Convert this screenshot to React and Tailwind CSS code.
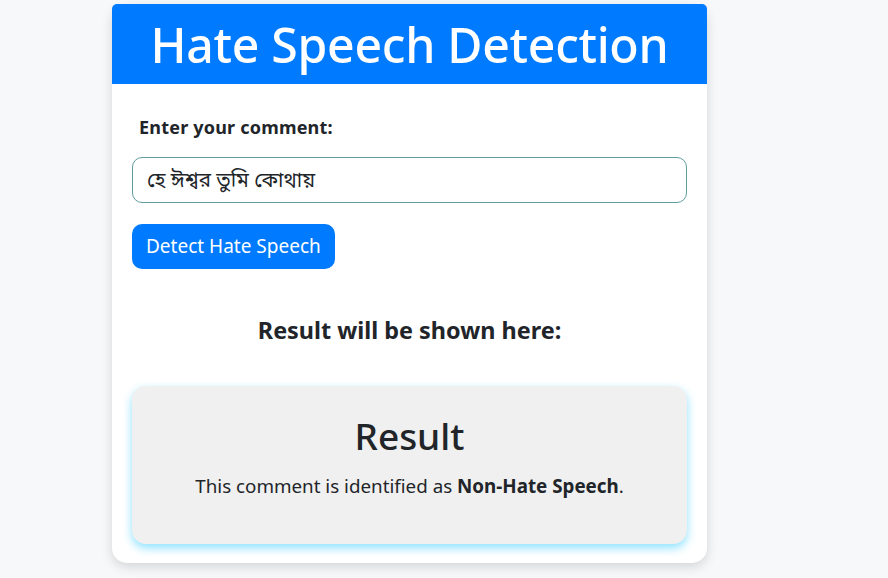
export default function App() {
  return (
    <div
      className="min-h-screen bg-[#f7f8fa] flex"
      style={{ fontFamily: '"Noto Sans", "Noto Sans Bengali", "Open Sans", sans-serif' }}
    >
      <div className="w-[595px] ml-[112px] mt-[4px] mb-[15px] bg-white rounded-[15px] shadow-[0_4px_12px_rgba(0,0,0,0.14)] pb-[19px] self-start">
        <div className="bg-[#007bff] rounded-t-[5px] h-[80px] flex items-center justify-center">
          <h1 className="text-white text-[48.2px] leading-none font-medium tracking-[-0.3px]">Hate Speech Detection</h1>
        </div>
        <div className="px-[20px] pt-[31px]">
          <label className="block ml-[7px] text-[18px] tracking-[0.2px] font-bold text-[#212529] leading-[24px]">Enter your comment:</label>
          <input
            type="text"
            defaultValue="হে ঈশ্বর তুমি কোথায়"
            className="mt-[18px] w-full h-[46px] border border-[#5f9ea0] rounded-[10px] px-[14px] text-[20.5px] text-[#212529] outline-none"
          />
          <button className="mt-[21px] h-[45px] px-[14px] bg-[#007bff] text-white text-[19px] rounded-[10px]">
            Detect Hate Speech
          </button>
          <h3 className="mt-[46px] text-center text-[23.4px] font-bold text-[#212529] leading-[30px]">Result will be shown here:</h3>
          <div className="mt-[41px] h-[158px] bg-[#f0f0f0] rounded-[14px] shadow-[0_4px_10px_rgba(0,191,255,0.45)] flex flex-col items-center pt-[26px]">
            <h2 className="text-[37px] leading-[48px] text-[#212529] font-medium">Result</h2>
            <p className="mt-[12px] text-[18.8px] text-[#212529]">
              This comment is identified as <strong className="font-bold">Non-Hate Speech</strong>.
            </p>
          </div>
        </div>
      </div>
    </div>
  );
}
